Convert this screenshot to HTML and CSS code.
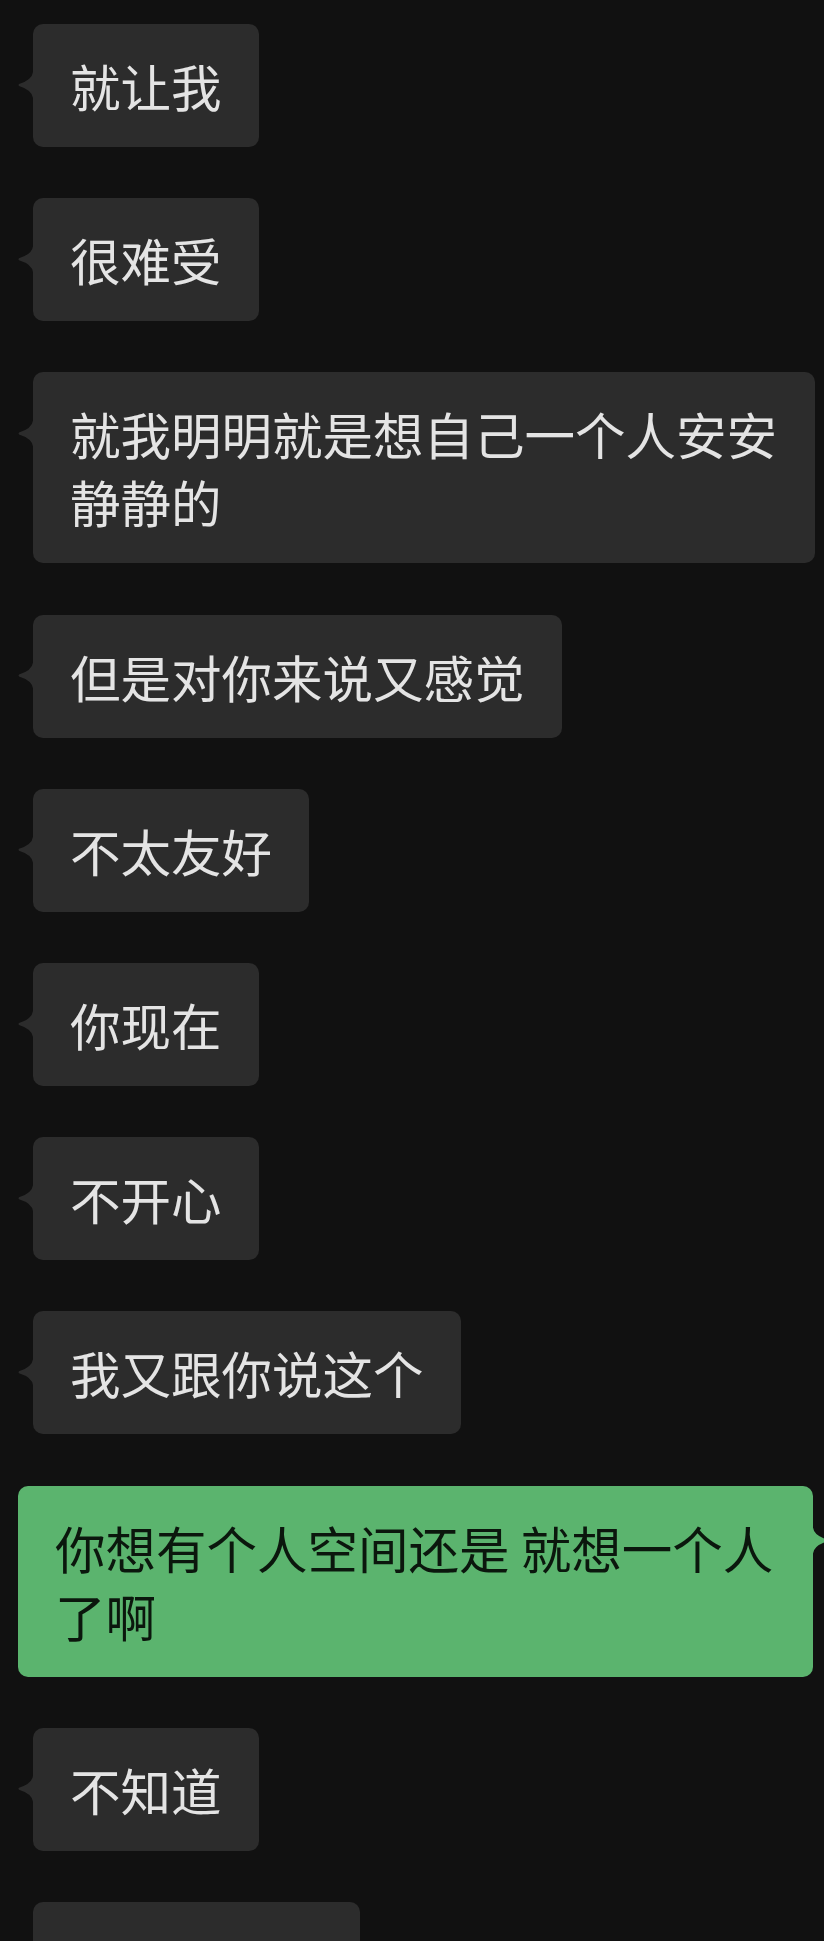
FILE: index.html
```html
<!DOCTYPE html>
<html lang="zh-CN">
<head>
    <meta charset="UTF-8">
    <meta name="viewport" content="width=device-width, initial-scale=1.0">
    <title>聊天记录</title>
    <link rel="stylesheet" href="styles.css">
</head>
<body>
    <div class="chat">
        <div class="msg msg-in">就让我</div>
        <div class="msg msg-in">很难受</div>
        <div class="msg msg-in">就我明明就是想自己一个人安安静静的</div>
        <div class="msg msg-in">但是对你来说又感觉</div>
        <div class="msg msg-in">不太友好</div>
        <div class="msg msg-in">你现在</div>
        <div class="msg msg-in">不开心</div>
        <div class="msg msg-in">我又跟你说这个</div>
        <div class="msg msg-out">你想有个人空间还是 就想一个人了啊</div>
        <div class="msg msg-in">不知道</div>
        <div class="msg msg-in">应该都一样</div>
    </div>
</body>
</html>
```

FILE: styles.css
```css
html, body {
    margin: 0;
    padding: 0;
    background-color: #111111;
}

body {
    font-family: "Noto Sans CJK SC", "Noto Sans", sans-serif;
    overflow: hidden;
}

.chat {
    height: 1941px;
    overflow: hidden;
    box-sizing: border-box;
    padding-top: 24px;
    display: flex;
    flex-direction: column;
    gap: 51.2px;
}

.msg {
    position: relative;
    box-sizing: border-box;
    font-size: 50.5px;
    line-height: 68px;
    padding: 27px 37px 28px 37px;
    border-radius: 10px;
    word-break: break-all;
}

.msg::before {
    content: "";
    position: absolute;
    top: 48px;
    width: 15px;
    height: 26px;
    background-color: inherit;
}

/* incoming - grey bubble on the left */
.msg-in {
    align-self: flex-start;
    margin-left: 33px;
    max-width: 782px;
    background-color: #2c2c2c;
    color: #e4e4e4;
}

.msg-in::before {
    left: -15px;
    clip-path: path("M15 0 Q14 8 1 12 Q0 13 1 14 Q14 18 15 26 Z");
}

/* outgoing - green bubble on the right */
.msg-out {
    align-self: flex-end;
    margin-right: 11px;
    max-width: 795px;
    background-color: #5bb46e;
    color: #0b170d;
}

.msg-out::before {
    right: -15px;
    top: 42px;
    clip-path: path("M0 0 Q1 8 14 12 Q15 13 14 14 Q1 18 0 26 Z");
}
```
